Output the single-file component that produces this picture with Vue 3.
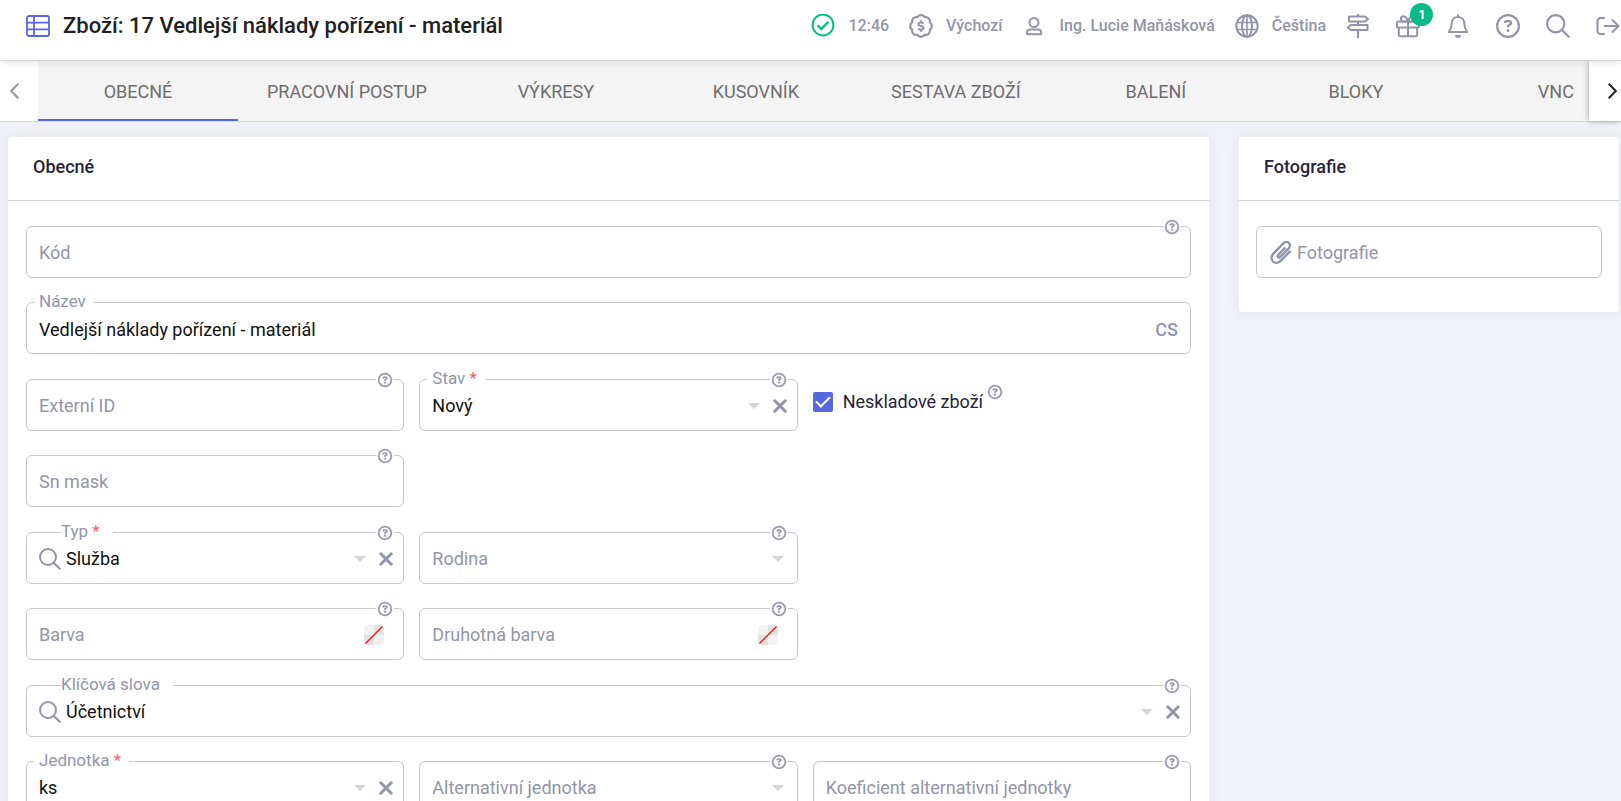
<script setup>
import { ref, h } from 'vue'

const tabs = ['OBECNÉ', 'PRACOVNÍ POSTUP', 'VÝKRESY', 'KUSOVNÍK', 'SESTAVA ZBOŽÍ', 'BALENÍ', 'BLOKY', 'VNC']
const activeTab = ref(0)
const nonStock = ref(true)

const fields = [
  { id: 'kod', label: 'Kód', type: 'text', help: true, span: 'full' },
  { id: 'nazev', label: 'Název', type: 'text', value: 'Vedlejší náklady pořízení - materiál', lang: 'CS', span: 'full' },
  { id: 'externi', label: 'Externí ID', type: 'text', help: true, span: 'first' },
  { id: 'stav', label: 'Stav', type: 'select', value: 'Nový', required: true, help: true },
  { id: 'neskladove', label: 'Neskladové zboží', type: 'check', help: true },
  { id: 'snmask', label: 'Sn mask', type: 'text', help: true, span: 'first' },
  { id: 'typ', label: 'Typ', type: 'select', value: 'Služba', required: true, help: true, search: true, span: 'first' },
  { id: 'rodina', label: 'Rodina', type: 'select', help: true },
  { id: 'barva', label: 'Barva', type: 'color', help: true, span: 'first' },
  { id: 'barva2', label: 'Druhotná barva', type: 'color', help: true },
  { id: 'klicova', label: 'Klíčová slova', type: 'select', value: 'Účetnictví', help: true, search: true, span: 'full' },
  { id: 'jednotka', label: 'Jednotka', type: 'select', value: 'ks', required: true, span: 'first' },
  { id: 'altjednotka', label: 'Alternativní jednotka', type: 'select', help: true },
  { id: 'koeficient', label: 'Koeficient alternativní jednotky', type: 'text', help: true }
]

const HelpIcon = () =>
  h('svg', { viewBox: '0 0 512 512', fill: 'currentColor', 'aria-hidden': 'true' }, [
    h('path', {
      d: 'M464 256A208 208 0 1 0 48 256a208 208 0 1 0 416 0zM0 256a256 256 0 1 1 512 0A256 256 0 1 1 0 256zm169.8-90.7c7.9-22.3 29.1-37.3 52.8-37.3h58.3c34.9 0 63.1 28.3 63.1 63.1c0 22.6-12.1 43.5-31.7 54.8L280 264.4c-.2 13-10.9 23.6-24 23.6c-13.3 0-24-10.7-24-24V250.5c0-8.6 4.6-16.5 12.1-20.8l44.3-25.4c4.7-2.7 7.6-7.7 7.6-13.1c0-8.4-6.8-15.1-15.1-15.1H222.6c-3.4 0-6.4 2.1-7.5 5.3l-.4 1.2c-4.4 12.5-18.2 19-30.6 14.6s-19-18.2-14.6-30.6l.4-1.2zM224 352a32 32 0 1 1 64 0 32 32 0 1 1-64 0z'
    })
  ])
</script>

<template>
  <div class="page">
    <header class="topbar">
      <svg class="title-icon" viewBox="0 0 24 22" fill="none" stroke="currentColor" stroke-width="1.8" aria-hidden="true">
        <rect x="1" y="1" width="22" height="20" rx="2" />
        <path d="M1 7.7h22M1 14.3h22M8 1v20" />
      </svg>
      <h1>Zboží: 17 Vedlejší náklady pořízení - materiál</h1>

      <div class="status">
        <span class="entry">
          <svg class="icon ok" viewBox="0 0 24 24" fill="none" stroke="currentColor" stroke-width="2" aria-hidden="true">
            <circle cx="12" cy="11" r="10.4" />
            <path d="M6.7 11.4l3.6 3.6 7-7.2" stroke-width="2.4" />
          </svg>
          <span>12:46</span>
        </span>
        <button class="entry" type="button">
          <svg class="icon" viewBox="0 0 24 24" fill="none" stroke="currentColor" stroke-width="2.2" stroke-linejoin="round" aria-hidden="true">
            <path d="M8.33 3.13A4.4 4.4 0 0 1 15.67 3.13A4.4 4.4 0 0 1 20.87 8.33A4.4 4.4 0 0 1 20.87 15.67A4.4 4.4 0 0 1 15.67 20.87A4.4 4.4 0 0 1 8.33 20.87A4.4 4.4 0 0 1 3.13 15.67A4.4 4.4 0 0 1 3.13 8.33A4.4 4.4 0 0 1 8.33 3.13z" />
            <path d="M14.6 9.3c-1-.5-1.9-.7-2.7-.7-1.5 0-2.4.6-2.4 1.6 0 2.4 5.1 1.2 5.1 3.700 0 1.100-1 1.700-2.500 1.700-1 0-2-.3-2.900-.8M12 6.300v2.300M12 15.500v2.300" stroke-width="2" />
          </svg>
          <span>Výchozí</span>
        </button>
        <button class="entry" type="button">
          <svg class="icon" viewBox="0 0 24 24" fill="none" stroke="currentColor" stroke-width="2" stroke-linejoin="round" aria-hidden="true">
            <circle cx="12" cy="8.5" r="4.5" />
            <path d="M8 15.6h8c1.8 0 3.2 1.400 3.2 3.200v.7c0 .5-.3.700-.7.700h-13c-.4 0-.7-.2-.7-.7v-.7c0-1.800 1.400-3.200 3.200-3.200z" />
          </svg>
          <span>Ing. Lucie Maňásková</span>
        </button>
        <button class="entry" type="button">
          <svg class="icon" viewBox="0 0 24 24" fill="none" stroke="currentColor" stroke-width="2" aria-hidden="true">
            <circle cx="12" cy="12" r="10.7" />
            <ellipse cx="12" cy="12" rx="5" ry="10.7" />
            <path d="M2 8.5h20M2 15.5h20M12 1.2v21.6" stroke-width="1.600" />
          </svg>
          <span>Čeština</span>
        </button>

        <nav class="tools" aria-label="Nástroje">
          <button type="button" aria-label="Rozcestník">
            <svg class="icon" viewBox="0 0 24 24" fill="none" stroke="currentColor" stroke-width="2.1" stroke-linejoin="round" aria-hidden="true">
              <path d="M3 2.500h16l2.900 2.500-2.900 2.500H3z" />
              <path d="M21.500 11H4.800l-2.900 2.500L4.800 16h16.700z" />
              <path d="M12 0v2.500M12 7.500V11M12 16v8" />
            </svg>
          </button>
          <button class="gift" type="button" aria-label="Novinky">
            <svg class="icon" viewBox="0 0 24 24" fill="none" stroke="currentColor" stroke-width="2" stroke-linejoin="round" aria-hidden="true">
              <rect x="1" y="7.5" width="22" height="6" rx="1" />
              <path d="M2.8 13.5v7.300c0 .9.700 1.500 1.500 1.500h15.400c.8 0 1.500-.6 1.500-1.500v-7.300M12 7.500v14.800" />
              <path d="M12 7.500c-1-3-2.500-5.300-4.500-5.300-1.500 0-2.600 1.100-2.600 2.600 0 1.600 1.100 2.700 2.600 2.700zM12 7.500c1-3 2.500-5.300 4.500-5.300 1.500 0 2.600 1.100 2.600 2.600 0 1.600-1.100 2.700-2.600 2.700z" />
            </svg>
            <span class="badge">1</span>
          </button>
          <button type="button" aria-label="Upozornění">
            <svg class="icon" viewBox="0 0 24 24" fill="none" stroke="currentColor" stroke-width="2" stroke-linejoin="round" stroke-linecap="round" aria-hidden="true">
              <path d="M12 3c-3.700 0-6.300 2.700-6.300 6.500 0 4.300-1.200 6.300-2.900 8.500h18.400c-1.700-2.200-2.900-4.200-2.900-8.500C18.300 5.700 15.700 3 12 3zM12 1v2" />
              <path d="M9 21h6a3 3 0 0 1-6 0z" fill="currentColor" stroke="none" />
            </svg>
          </button>
          <button type="button" aria-label="Nápověda"><HelpIcon class="icon" /></button>
          <button type="button" aria-label="Hledat">
            <svg class="icon" viewBox="0 0 24 24" fill="none" stroke="currentColor" stroke-width="2.2" aria-hidden="true">
              <circle cx="9.7" cy="9.7" r="8.6" />
              <path d="M15.900 15.900l7.300 7.300" />
            </svg>
          </button>
          <button type="button" aria-label="Odhlásit">
            <svg class="icon" viewBox="0 0 24 24" fill="none" stroke="currentColor" stroke-width="2.1" stroke-linejoin="round" stroke-linecap="round" aria-hidden="true">
              <path d="M8 4H4.600C2.900 4 1.500 5.400 1.500 7.100v9.800c0 1.700 1.400 3.100 3.100 3.100H8M8.700 12h13.500M16.500 6l6 6-6 6" />
            </svg>
          </button>
        </nav>
      </div>
    </header>

    <div class="tabbar">
      <button class="pager prev" type="button" aria-label="Předchozí">
        <svg viewBox="0 0 9 16" fill="none" stroke="currentColor" stroke-width="2" aria-hidden="true"><path d="M8.3.7L1.200 8l7.100 7.300" /></svg>
      </button>
      <div class="tabs" role="tablist">
        <button
          v-for="(tab, i) in tabs"
          :key="tab"
          type="button"
          role="tab"
          class="tab"
          :class="{ active: i === activeTab }"
          :aria-selected="i === activeTab"
          @click="activeTab = i"
        >{{ tab }}</button>
      </div>
      <button class="pager next" type="button" aria-label="Další">
        <svg viewBox="0 0 9 16" fill="none" stroke="currentColor" stroke-width="2" aria-hidden="true"><path d="M.7.700L7.800 8 .7 15.300" /></svg>
      </button>
    </div>

    <main class="content">
      <section class="card general">
        <h2>Obecné</h2>
        <form class="grid" @submit.prevent>
          <template v-for="f in fields" :key="f.id">
            <div v-if="f.type === 'check'" class="check">
              <input :id="f.id" v-model="nonStock" type="checkbox" />
              <label :for="f.id">{{ f.label }}</label>
              <HelpIcon class="check-help" />
            </div>
            <div v-else class="field" :class="[f.span, { filled: f.value, search: f.search }]">
              <label :for="f.id">{{ f.label }}<span v-if="f.required" class="required"> *</span></label>
              <svg v-if="f.search" class="lens" viewBox="0 0 22 22" fill="none" stroke="currentColor" stroke-width="2" aria-hidden="true">
                <circle cx="9" cy="9" r="8" />
                <path d="M14.700 14.700l6.600 6.600" />
              </svg>
              <select v-if="f.type === 'select'" :id="f.id">
                <option>{{ f.value }}</option>
              </select>
              <input v-else :id="f.id" type="text" :value="f.value" />
              <button v-if="f.lang" class="lang" type="button">{{ f.lang }}</button>
              <span v-if="f.type === 'select'" class="caret"></span>
              <button v-if="f.type === 'select' && f.value" class="clear" type="button" aria-label="Vymazat">
                <svg viewBox="0 0 14 14" fill="none" stroke="currentColor" stroke-width="3" stroke-linecap="round" aria-hidden="true"><path d="M1.800 1.800l10.400 10.400M12.200 1.800L1.800 12.200" /></svg>
              </button>
              <button v-if="f.type === 'color'" class="swatch" type="button" aria-label="Vybrat barvu">
                <svg viewBox="0 0 20 20" stroke="#ee1c1c" stroke-width="1.4" aria-hidden="true"><path d="M1.500 18.500l17-17" /></svg>
              </button>
              <span v-if="f.help" class="help"><HelpIcon /></span>
            </div>
          </template>
        </form>
      </section>

      <aside class="card photos">
        <h2>Fotografie</h2>
        <button class="upload" type="button">
          <svg viewBox="0 0 24 24" fill="none" stroke="currentColor" stroke-width="2.4" stroke-linecap="round" aria-hidden="true">
            <path d="M15.800 8.200l-6.500 6.600c-.8.800-.8 1.700-.2 2.300.6.600 1.600.5 2.300-.2l8.300-8.500c1.600-1.700 1.600-4 .2-5.400s-3.700-1.400-5.300.2L4.400 13.600c-2.400 2.500-2.400 5.700-.4 7.700 2.100 2 5.300 1.900 7.700-.5l9.100-9.200" />
          </svg>
          <span>Fotografie</span>
        </button>
      </aside>
    </main>
  </div>
</template>

<style>
body {
  margin: 0;
  background: #f0f2f7;
}
</style>

<style scoped>
.page {
  --muted: #9295a9;
  --line: #c5c6d0;
  --accent: #5867dd;
  box-sizing: border-box;
  height: 100vh;
  display: flex;
  flex-direction: column;
  overflow: hidden;
  font-family: Roboto, "Liberation Sans", sans-serif;
  font-size: 18px;
  color: #111;
}
.page * {
  box-sizing: border-box;
}
button {
  margin: 0;
  padding: 0;
  border: 0;
  background: none;
  color: inherit;
  font: inherit;
  cursor: pointer;
}
svg {
  display: block;
  flex: none;
}

.topbar {
  position: relative;
  z-index: 3;
  flex: none;
  height: 61px;
  display: flex;
  align-items: center;
  padding: 0 1px 8px 26px;
  background: #fff;
  border-bottom: 1px solid #d4d5da;
  box-shadow: 0 1px 8px rgba(0, 0, 0, 0.12);
}
.title-icon {
  width: 24px;
  height: 22px;
  color: var(--accent);
}
h1 {
  margin: 0 auto 0 13px;
  font-size: 22px;
  font-weight: 500;
  line-height: 28px;
  color: #212121;
  white-space: nowrap;
}
.status {
  display: flex;
  align-items: center;
  gap: 20px;
  color: var(--muted);
  font-size: 16px;
  font-weight: 500;
  line-height: 24px;
  white-space: nowrap;
}
.entry {
  display: flex;
  align-items: center;
  gap: 13px;
}
.icon {
  width: 24px;
  height: 24px;
}
.ok {
  color: #0abb87;
}
.tools {
  display: flex;
  gap: 26px;
}
.gift {
  position: relative;
}
.badge {
  position: absolute;
  left: 14px;
  top: -11px;
  width: 23px;
  height: 23px;
  border-radius: 50%;
  background: #0abb87;
  color: #fff;
  font-family: Inter, sans-serif;
  font-size: 12px;
  font-weight: 700;
  line-height: 23px;
  text-align: center;
}

.tabbar {
  flex: none;
  display: flex;
  height: 61px;
  background: #f4f4f4;
  border-bottom: 1px solid #dcdcde;
}
.tabs {
  flex: 1;
  min-width: 0;
  display: flex;
  overflow: hidden;
}
.tab {
  flex: none;
  min-width: 200px;
  padding: 2px 29px 0;
  border-bottom: 2px solid transparent;
  color: #6e6e6e;
  font-weight: 450;
}
.tab.active {
  border-bottom-color: var(--accent);
}
.pager {
  flex: none;
  background: #fff;
}
.pager svg {
  width: 9px;
  height: 16px;
}
.prev {
  width: 38px;
  padding-left: 10px;
  color: #999;
}
.next {
  position: relative;
  z-index: 1;
  width: 32px;
  padding-left: 19px;
  color: #222;
  box-shadow: 0 0 6px rgba(0, 0, 0, 0.35);
}

.content {
  flex: 1;
  min-height: 0;
  display: flex;
  align-items: flex-start;
  gap: 30px;
  padding: 15px 2px 0 8px;
  overflow: hidden;
}
.card {
  background: #fff;
  border-radius: 4px;
  box-shadow: 0 0 13px rgba(82, 63, 105, 0.07);
}
.general {
  flex: 1;
  min-width: 0;
}
.photos {
  flex: none;
  width: 380px;
}
h2 {
  margin: 0;
  height: 64px;
  padding: 18px 25px 0;
  border-bottom: 1px solid #d4d5dc;
  font-size: 18px;
  font-weight: 500;
  line-height: 24px;
  color: #27243c;
}
.grid {
  display: grid;
  grid-template-columns: repeat(3, minmax(0, 1fr));
  grid-auto-rows: 76px 77px;
  column-gap: 15px;
  align-items: start;
  padding: 25px 18px 0;
}
.field {
  position: relative;
  height: 52px;
  display: flex;
  align-items: center;
  padding: 2px 10px 0 12px;
  border: 1px solid var(--line);
  border-radius: 6px;
}
.full {
  grid-column: 1 / -1;
}
.first {
  grid-column-start: 1;
}
.field > label {
  position: absolute;
  left: 12px;
  top: 14px;
  line-height: 24px;
  color: var(--muted);
  white-space: nowrap;
  pointer-events: none;
}
.filled > label {
  left: 7px;
  top: -14px;
  padding: 0 8px 0 5px;
  background: #fff;
  font-size: 17px;
}
.search > label {
  left: 34px;
  padding: 0 13px 0 0;
}
.required {
  color: #f4626c;
}
.field input,
.field select {
  flex: 1;
  min-width: 0;
  height: 48px;
  margin: 0;
  padding: 0;
  border: 0;
  outline: 0;
  background: transparent;
  appearance: none;
  font: inherit;
  color: #111;
}
.field select {
  padding-bottom: 2px;
}
.lens {
  width: 22px;
  height: 22px;
  margin-right: 5px;
  color: var(--muted);
}
.lang {
  margin-right: 2px;
  color: var(--muted);
  font-weight: 500;
}
.caret {
  margin-right: 3px;
  border: 6px solid transparent;
  border-top-color: #d3d4dc;
  border-bottom: 0;
}
.clear {
  margin-left: 10px;
  color: var(--muted);
}
.clear svg {
  width: 14px;
  height: 14px;
}
.swatch {
  width: 20px;
  height: 20px;
  margin-right: 9px;
  border-radius: 4px;
  background: conic-gradient(#e2e2e2 0 25%, #f2f2f2 0 50%, #e2e2e2 0 75%, #f2f2f2 0);
}
.help {
  position: absolute;
  right: 9px;
  top: -7px;
  padding: 0 2px;
  background: #fff;
  color: var(--muted);
}
.help svg,
.check-help {
  width: 14px;
  height: 14px;
  stroke: currentColor;
  stroke-width: 16;
  overflow: visible;
}

.check {
  display: flex;
  align-items: center;
  padding-top: 6px;
  color: #27243c;
}
.check input {
  appearance: none;
  flex: none;
  width: 20px;
  height: 20px;
  margin: 0 10px 0 0;
  border: 2px solid var(--line);
  border-radius: 2px;
  display: grid;
  place-content: center;
}
.check input:checked {
  border-color: var(--accent);
  background: var(--accent);
}
.check input:checked::after {
  content: "";
  width: 12px;
  height: 6px;
  margin-bottom: 4px;
  border: solid #fff;
  border-width: 0 0 2px 2px;
  transform: rotate(-45deg);
}
.check label {
  line-height: 24px;
}
.check-help {
  margin: 0 0 20px 5px;
  color: var(--muted);
}

.upload {
  display: flex;
  align-items: center;
  gap: 4px;
  width: calc(100% - 34px);
  height: 52px;
  margin: 25px 17px 34px;
  padding: 0 12px;
  border: 1px solid var(--line);
  border-radius: 6px;
  color: var(--muted);
}
.upload svg {
  width: 24px;
  height: 24px;
}
</style>
